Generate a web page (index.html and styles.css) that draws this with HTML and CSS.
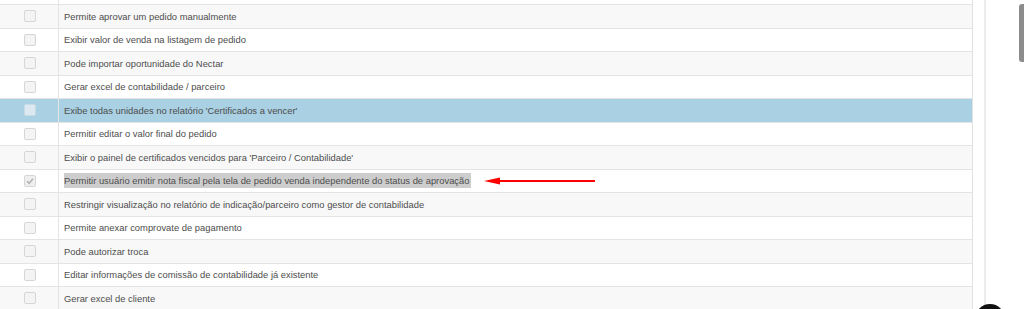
FILE: index.html
```html
<!DOCTYPE html>
<html lang="pt-BR">
<head>
    <meta charset="UTF-8">
    <title>Permissões</title>
    <link rel="stylesheet" href="styles.css">
</head>
<body>
<div class="page">
    <div class="list">
        <div class="row stub"><div class="chk"></div><div class="txt"></div></div>
        <div class="row"><div class="chk"><span class="box"></span></div><div class="txt">Permite aprovar um pedido manualmente</div></div>
        <div class="row"><div class="chk"><span class="box"></span></div><div class="txt">Exibir valor de venda na listagem de pedido</div></div>
        <div class="row"><div class="chk"><span class="box"></span></div><div class="txt">Pode importar oportunidade do Nectar</div></div>
        <div class="row"><div class="chk"><span class="box"></span></div><div class="txt">Gerar excel de contabilidade / parceiro</div></div>
        <div class="row active"><div class="chk"><span class="box"></span></div><div class="txt">Exibe todas unidades no relatório 'Certificados a vencer'</div></div>
        <div class="row"><div class="chk"><span class="box"></span></div><div class="txt">Permitir editar o valor final do pedido</div></div>
        <div class="row"><div class="chk"><span class="box"></span></div><div class="txt">Exibir o painel de certificados vencidos para 'Parceiro / Contabilidade'</div></div>
        <div class="row">
            <div class="chk">
                <span class="box checked">
                    <svg width="10" height="10" viewBox="0 0 10 10"><path d="M2 5.2 L4.2 7.3 L8 2.8" fill="none" stroke="#b5b5b5" stroke-width="1.6"/></svg>
                </span>
            </div>
            <div class="txt">
                <span class="marked">Permitir usuário emitir nota fiscal pela tela de pedido venda independente do status de aprovação</span>
                <svg class="arrow" width="112" height="8" viewBox="0 0 112 8"><path d="M14 4 H111" stroke="#f00" stroke-width="2"/><path d="M0 4 L16 0.5 L16 7.5 Z" fill="#f00"/></svg>
            </div>
        </div>
        <div class="row"><div class="chk"><span class="box"></span></div><div class="txt">Restringir visualização no relatório de indicação/parceiro como gestor de contabilidade</div></div>
        <div class="row"><div class="chk"><span class="box"></span></div><div class="txt">Permite anexar comprovate de pagamento</div></div>
        <div class="row"><div class="chk"><span class="box"></span></div><div class="txt">Pode autorizar troca</div></div>
        <div class="row"><div class="chk"><span class="box"></span></div><div class="txt">Editar informações de comissão de contabilidade já existente</div></div>
        <div class="row"><div class="chk"><span class="box"></span></div><div class="txt">Gerar excel de cliente</div></div>
    </div>
    <div class="gap"></div>
    <div class="rule"></div>
    <div class="pane">
        <div class="thumb"></div>
    </div>
</div>
<div class="bubble"></div>
</body>
</html>
```

FILE: styles.css
```css
*{
    margin: 0;
    padding: 0;
    box-sizing: border-box;
}
body{
    font-family: "Liberation Sans", Arial, sans-serif;
    font-size: 9.4px;
    color: #4d4d4d;
    background: #fff;
    overflow: hidden;
}
.page{
    display: flex;
    height: 309px;
    overflow: hidden;
}
.list{
    width: 973px;
    border-right: 1px solid #e2e2e2;
}
.row{
    display: flex;
    height: 23.5px;
    border-top: 1px solid #e4e4e4;
}
.row:nth-child(even){
    background: #f8f8f8;
}
.row.stub{
    height: 4px;
    border-top: 0;
}
.row.active{
    background: #a9d0e3;
}
.chk{
    width: 59px;
    border-right: 1px solid #e4e4e4;
    display: flex;
    align-items: center;
    padding-left: 24px;
}
.box{
    width: 12px;
    height: 12px;
    border: 1px solid #d6d6d6;
    border-radius: 2px;
    background: #f4f4f4;
    display: flex;
    align-items: center;
    justify-content: center;
}
.active .box{
    background: #dde9f0;
    border-color: #c9dbe5;
}
.box.checked{
    background: #efefef;
}
.txt{
    flex: 1;
    display: flex;
    align-items: center;
    padding-left: 5px;
    white-space: nowrap;
}
.marked{
    background: #cdcdcd;
    padding: 2px 2px 2px 0;
}
.arrow{
    margin-left: 13px;
}
.gap{
    width: 11px;
}
.rule{
    width: 2px;
    background: #ececec;
}
.pane{
    flex: 1;
    display: flex;
    justify-content: flex-end;
}
.thumb{
    width: 5px;
    height: 58px;
    margin-top: 4px;
    background: #8c8c8c;
    border-radius: 3px 0 0 3px;
}
.bubble{
    position: absolute;
    left: 975px;
    top: 304px;
    width: 30px;
    height: 30px;
    border-radius: 50%;
    background: #111;
}
```
